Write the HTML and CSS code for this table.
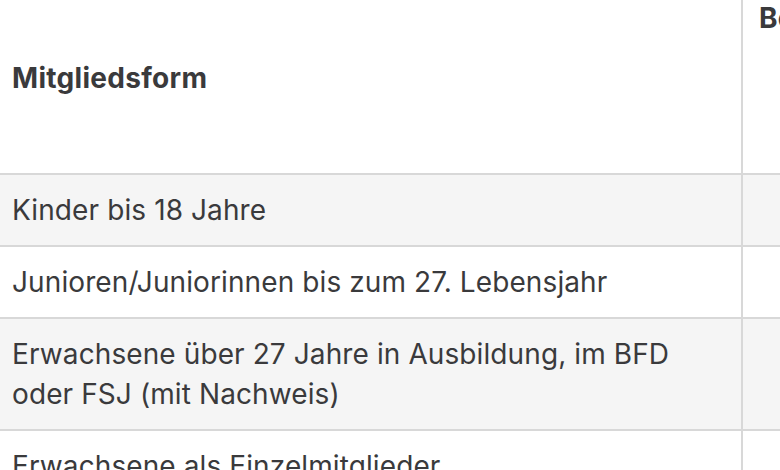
FILE: index.html
```html
<!DOCTYPE html>
<html lang="de">
<head>
<meta charset="utf-8">
<link rel="stylesheet" href="styles.css">
</head>
<body>
<table class="fees">
  <thead>
    <tr>
      <th class="col-form">Mitgliedsform</th>
      <th class="col-fee">Beitrag</th>
    </tr>
  </thead>
  <tbody>
    <tr class="alt">
      <td class="col-form">Kinder bis 18 Jahre</td>
      <td class="col-fee"></td>
    </tr>
    <tr>
      <td class="col-form">Junioren/Juniorinnen bis zum 27. Lebensjahr</td>
      <td class="col-fee"></td>
    </tr>
    <tr class="alt">
      <td class="col-form">Erwachsene über 27 Jahre in Ausbildung, im BFD oder FSJ (mit Nachweis)</td>
      <td class="col-fee"></td>
    </tr>
    <tr>
      <td class="col-form">Erwachsene als Einzelmitglieder</td>
      <td class="col-fee"></td>
    </tr>
  </tbody>
</table>
</body>
</html>
```

FILE: styles.css
```css
html, body {
  margin: 0;
  padding: 0;
  background: #ffffff;
  overflow: hidden;
}
body {
  width: 780px;
  height: 470px;
  font-family: Inter, "Noto Sans", "Liberation Sans", sans-serif;
  font-size: 28px;
  letter-spacing: 0.1px;
  line-height: 40px;
  color: #3a3a3c;
}
.fees {
  border-collapse: collapse;
  width: 900px;
  margin-top: -18px;
}
.fees th,
.fees td {
  text-align: left;
  padding: 15px 12px;
  border-bottom: 2px solid #d8d8d8;
}
.fees th {
  font-weight: 700;
  letter-spacing: 0.3px;
  height: 160px;
  vertical-align: middle;
}
.fees .col-form {
  width: 717px;
  border-right: 2px solid #d8d8d8;
}
.fees .col-fee {
  padding-left: 16px;
}
.fees th.col-fee {
  vertical-align: top;
  padding-top: 16px;
}
.fees tr.alt td {
  background: #f5f5f5;
}
```
